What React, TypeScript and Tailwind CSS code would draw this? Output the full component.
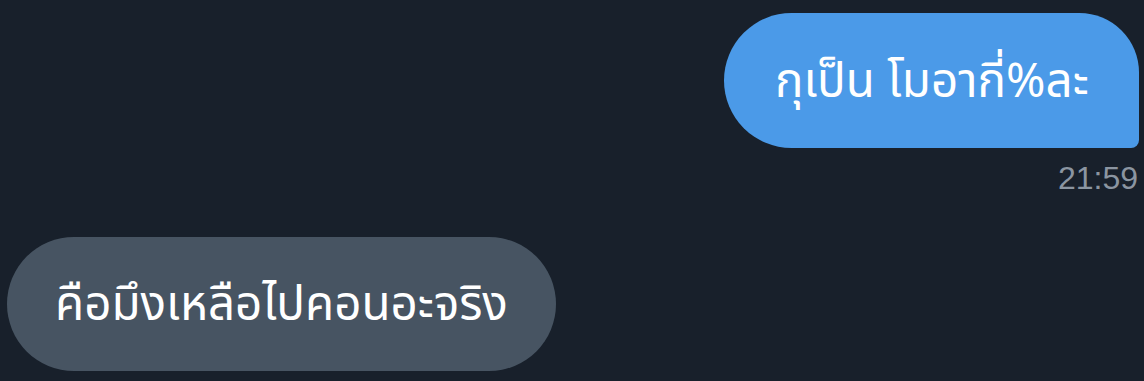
const App = () => {
  return (
    <div
      className="w-[1144px] h-[381px] bg-[#18202b] overflow-hidden flex flex-col"
      style={{ fontFamily: '"Noto Sans Thai", "Noto Sans", "Liberation Sans", sans-serif' }}
    >
      <div className="flex justify-end pr-[5px] pt-[13px]">
        <div className="w-[415px] h-[135px] bg-[#4b9ae8] rounded-tl-[68px] rounded-tr-[60px] rounded-bl-[68px] rounded-br-[8px] flex items-center pl-[51px]">
          <span className="text-white text-[47.5px] leading-none pt-[4px]">กุเป็น โมอากี่%ละ</span>
        </div>
      </div>
      <div className="flex justify-end pr-[6px] pt-[14px]">
        <span className="text-[#8b95a1] text-[32px] leading-none" style={{ fontFamily: '"Liberation Sans", sans-serif' }}>
          21:59
        </span>
      </div>
      <div className="flex pl-[7px] pt-[43px]">
        <div className="w-[549px] h-[134px] bg-[#475462] rounded-[67px] flex items-center pl-[48px]">
          <span className="text-white text-[47.5px] leading-none pt-[4px]">คือมึงเหลือไปคอนอะจริง</span>
        </div>
      </div>
    </div>
  );
};

export default App;
